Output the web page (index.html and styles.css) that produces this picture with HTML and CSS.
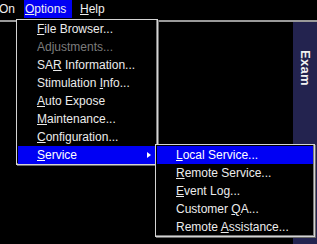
FILE: index.html
```html
<!DOCTYPE html>
<html>
<head>
<meta charset="utf-8">
<link rel="stylesheet" href="styles.css">
</head>
<body>
<div class="app">
  <div class="menubar">
    <span class="mb-item mb-on">On</span>
    <span class="mb-item mb-options active"><u>O</u>ptions</span>
    <span class="mb-item mb-help"><u>H</u>elp</span>
  </div>
  <div class="main">
    <div class="workspace"></div>
    <div class="exam-panel"><span class="exam-label">Exam</span></div>
  </div>
</div>

<div class="menu main-menu">
  <div class="mi"><u>F</u>ile Browser...</div>
  <div class="mi disabled">Adjustments...</div>
  <div class="mi">SA<u>R</u> Information...</div>
  <div class="mi">Stimulation <u>I</u>nfo...</div>
  <div class="mi"><u>A</u>uto Expose</div>
  <div class="mi"><u>M</u>aintenance...</div>
  <div class="mi"><u>C</u>onfiguration...</div>
  <div class="mi selected"><u>S</u>ervice<span class="arrow"></span></div>
</div>

<div class="menu sub-menu">
  <div class="mi selected"><u>L</u>ocal Service...</div>
  <div class="mi"><u>R</u>emote Service...</div>
  <div class="mi"><u>E</u>vent Log...</div>
  <div class="mi">Customer <u>Q</u>A...</div>
  <div class="mi">Remote <u>A</u>ssistance...</div>
</div>
</body>
</html>
```

FILE: styles.css
```css
html, body {
  margin: 0;
  padding: 0;
  background: #000;
  width: 317px;
  height: 244px;
  overflow: hidden;
}

body {
  font-family: "Liberation Sans", Arial, sans-serif;
  font-size: 12px;
  color: #ececec;
  position: relative;
}

u {
  text-decoration: underline;
  text-underline-offset: 1px;
}

.app {
  display: flex;
  flex-direction: column;
  height: 244px;
}

.menubar {
  display: flex;
  height: 20px;
  border-bottom: 2px solid #9a9a9a;
  box-sizing: content-box;
}

.mb-item {
  height: 18px;
  line-height: 18px;
  color: #f0f0f0;
}

.mb-on {
  margin-left: -1px;
  width: 25px;
}

.mb-options {
  width: 48px;
  padding-left: 1px;
  box-sizing: border-box;
}

.mb-options.active {
  background: #0000f4;
}

.mb-help {
  margin-left: 8px;
}

.main {
  flex: 1;
  display: flex;
}

.workspace {
  flex: 1;
}

.exam-panel {
  width: 24px;
  background: #23234f;
  display: flex;
  justify-content: center;
  padding-top: 28px;
  box-sizing: border-box;
}

.exam-label {
  writing-mode: vertical-rl;
  font-weight: bold;
  font-size: 13px;
  color: #f2f2f2;
  letter-spacing: 0.3px;
  height: 36px;
}

.menu {
  position: absolute;
  background: #000;
  border: 1px solid #d4d4d4;
  box-shadow: inset -1px -1px 0 #7a7a7a, 1px 1px 0 #6a6a6a;
}

.main-menu {
  left: 16px;
  top: 19px;
  width: 138px;
  padding: 0 1px;
}

.sub-menu {
  left: 155px;
  top: 144px;
  width: 156px;
  padding: 1px 1px 0;
}

.mi {
  position: relative;
  height: 18px;
  line-height: 18px;
  padding-left: 19px;
  white-space: nowrap;
  color: #ececec;
}

.mi.disabled {
  color: #7c7c7c;
}

.mi.selected {
  background: #0000f4;
  color: #fff;
}

.arrow {
  position: absolute;
  right: 5px;
  top: 6px;
  width: 0;
  height: 0;
  border-top: 3.5px solid transparent;
  border-bottom: 3.5px solid transparent;
  border-left: 4px solid #fff;
}
```
